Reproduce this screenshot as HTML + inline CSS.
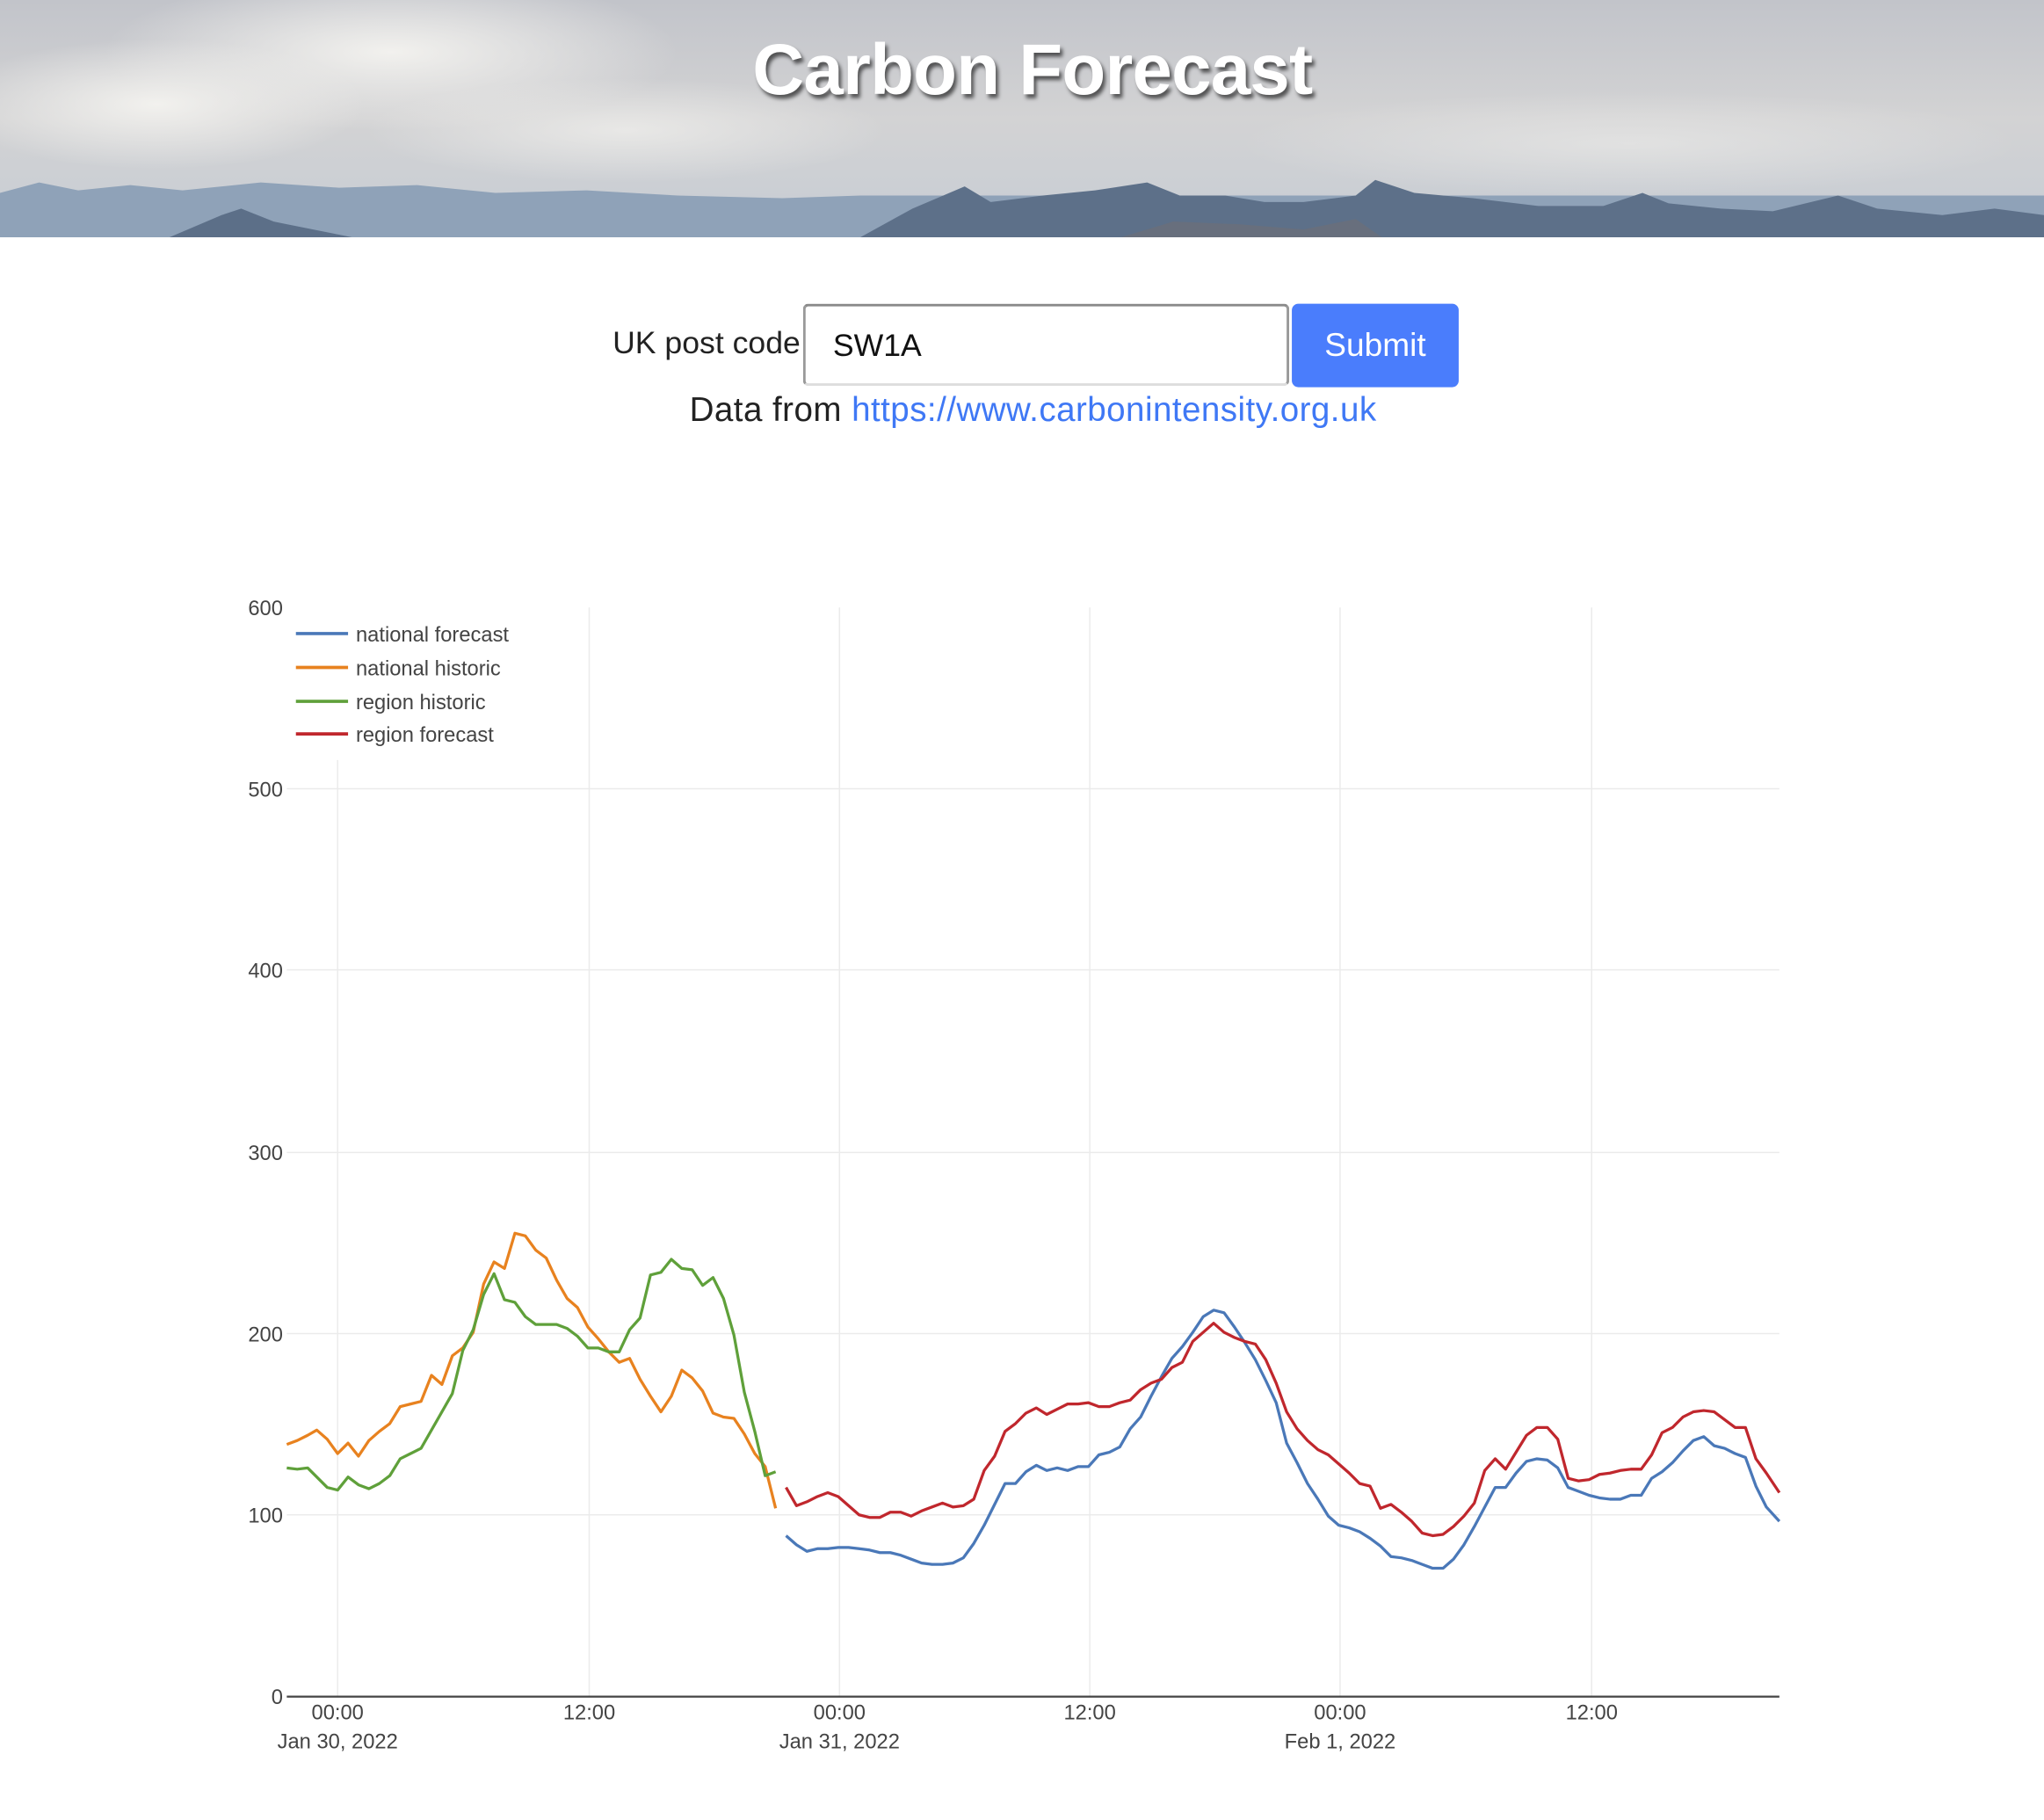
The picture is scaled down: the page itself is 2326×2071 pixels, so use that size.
<!DOCTYPE html>
<html><head><meta charset="utf-8"><style>
html,body{margin:0;padding:0;background:#fff;width:2326px;height:2070px;overflow:hidden}
#s{position:absolute;left:0;top:0;width:1568px;height:1396px;transform:scale(1.48342);transform-origin:0 0;font-family:"Liberation Sans",sans-serif}
.ban{position:absolute;left:0;top:0;width:1568px;height:182px;overflow:hidden}
h1{position:absolute;left:0;width:1584px;top:21px;margin:0;text-align:center;font-size:55px;font-weight:bold;color:#fff;text-shadow:2px 3px 3px rgba(0,0,0,.6);letter-spacing:-0.5px}
.lab{position:absolute;left:440px;width:174px;text-align:right;top:250px;font-size:24px;color:#222}
.inp{position:absolute;left:616px;top:233px;width:373px;height:63px;border:2px solid #999;border-top-color:#8a8a8a;border-bottom-color:#ddd;border-radius:4px;box-sizing:border-box}
.inp span{position:absolute;left:21px;top:17px;font-size:24px;color:#111}
.btn{position:absolute;left:991px;top:233px;width:128px;height:64px;background:#4a7dfc;border-radius:5px;color:#fff;font-size:25px;text-align:center;line-height:64px}
.data{position:absolute;left:0;width:1585px;text-align:center;top:299px;font-size:26px;color:#222;letter-spacing:0.3px}
.data a{color:#3f78f5;text-decoration:none}
</style></head><body><div id="s">
<div class="ban"><svg width="1568" height="182" viewBox="0 0 1568 182">
<defs><linearGradient id="sky" x1="0" y1="0" x2="0" y2="1"><stop offset="0" stop-color="#c2c4ca"/><stop offset=".5" stop-color="#d3d3d4"/><stop offset="1" stop-color="#c6ccd4"/></linearGradient>
<radialGradient id="cl" cx=".5" cy=".5" r=".5"><stop offset="0" stop-color="#f2f1ee"/><stop offset="1" stop-color="#f2f1ee" stop-opacity="0"/></radialGradient></defs>
<rect width="1568" height="182" fill="url(#sky)"/>
<ellipse cx="300" cy="40" rx="220" ry="60" fill="url(#cl)"/>
<ellipse cx="120" cy="80" rx="160" ry="50" fill="url(#cl)"/>
<ellipse cx="480" cy="100" rx="200" ry="40" fill="url(#cl)" opacity=".7"/>
<ellipse cx="1250" cy="110" rx="300" ry="40" fill="url(#cl)" opacity=".5"/>
<polygon points="0,182 0,148 30,140 60,146 100,142 140,146 200,140 260,144 320,142 380,148 450,146 520,150 600,152 660,150 700,150 1568,150 1568,182" fill="#8fa2b8"/>
<polygon points="130,182 170,165 185,160 210,170 260,180 270,182" fill="#5c6f88"/>
<polygon points="660,182 700,160 740,143 760,155 800,150 840,146 880,140 905,150 940,150 970,155 1000,155 1040,150 1055,138 1085,148 1130,152 1180,158 1230,158 1260,148 1280,156 1320,160 1360,162 1410,150 1440,160 1490,165 1530,160 1568,165 1568,182" fill="#5d7089"/>
<polygon points="860,182 900,170 950,172 1000,176 1040,168 1060,182" fill="#6e6f78" opacity=".7"/>
</svg></div>
<h1>Carbon Forecast</h1>
<div class="lab">UK post code</div>
<div class="inp"><span>SW1A</span></div>
<div class="btn">Submit</div>
<div class="data">Data from <a>https://www.carbonintensity.org.uk</a></div>
<svg style="position:absolute;left:0;top:0" width="1568" height="1396" viewBox="0 0 1568 1396" font-family="Liberation Sans, sans-serif">
<g stroke="#ebebeb" stroke-width="1">
<line x1="259" y1="583" x2="259" y2="1301"/><line x1="452" y1="466" x2="452" y2="1301"/><line x1="644" y1="466" x2="644" y2="1301"/><line x1="836" y1="466" x2="836" y2="1301"/><line x1="1028" y1="466" x2="1028" y2="1301"/><line x1="1221" y1="466" x2="1221" y2="1301"/>
<line x1="220" y1="605" x2="1365" y2="605"/><line x1="220" y1="744" x2="1365" y2="744"/><line x1="220" y1="884" x2="1365" y2="884"/><line x1="220" y1="1023" x2="1365" y2="1023"/><line x1="220" y1="1162" x2="1365" y2="1162"/>
</g>
<line x1="220" y1="1301.5" x2="1365" y2="1301.5" stroke="#444" stroke-width="1.5"/>
<g font-size="16" fill="#444" text-anchor="end">
<text x="217" y="472">600</text><text x="217" y="611">500</text><text x="217" y="750">400</text><text x="217" y="890">300</text><text x="217" y="1029">200</text><text x="217" y="1168">100</text><text x="217" y="1307">0</text>
</g>
<g font-size="16" fill="#444" text-anchor="middle">
<text x="259" y="1319">00:00</text><text x="452" y="1319">12:00</text><text x="644" y="1319">00:00</text><text x="836" y="1319">12:00</text><text x="1028" y="1319">00:00</text><text x="1221" y="1319">12:00</text>
<text x="259" y="1341">Jan 30, 2022</text><text x="644" y="1341">Jan 31, 2022</text><text x="1028" y="1341">Feb 1, 2022</text>
</g>
<g stroke-width="2.2" fill="none" stroke-linejoin="round">
<polyline stroke="#e8821f" points="220,1108 228,1105 236,1101 243,1097 251,1104 259,1115 267,1107 275,1117 283,1105 291,1098 299,1092 307,1079 315,1077 323,1075 331,1055 339,1062 347,1040 355,1034 363,1022 371,985 379,968 387,973 395,946 403,948 411,959 419,965 427,982 435,996 443,1003 451,1018 459,1027 467,1037 475,1045 483,1042 491,1058 499,1071 507,1083 515,1071 523,1051 531,1057 539,1067 547,1084 555,1087 563,1088 571,1100 579,1115 587,1125 595,1157"/>
<polyline stroke="#5fa03a" points="220,1126 228,1127 236,1126 243,1133 251,1141 259,1143 267,1133 275,1139 283,1142 291,1138 299,1132 307,1119 315,1115 323,1111 331,1097 339,1083 347,1069 355,1036 363,1020 371,993 379,977 387,997 395,999 403,1010 411,1016 419,1016 427,1016 435,1019 443,1025 451,1034 459,1034 467,1037 475,1037 483,1020 491,1011 499,978 507,976 515,966 523,973 531,974 539,986 547,980 555,996 563,1024 571,1068 579,1098 587,1132 595,1129"/>
<polyline stroke="#4a78b8" points="603,1178 611,1185 619,1190 627,1188 635,1188 643,1187 651,1187 659,1188 667,1189 675,1191 683,1191 691,1193 699,1196 707,1199 715,1200 723,1200 731,1199 739,1195 747,1184 755,1170 763,1154 771,1138 779,1138 787,1129 795,1124 803,1128 811,1126 819,1128 827,1125 835,1125 843,1116 851,1114 859,1110 867,1096 875,1087 883,1071 891,1056 899,1042 907,1033 915,1022 923,1010 931,1005 939,1007 947,1018 955,1030 963,1043 971,1059 979,1076 987,1107 995,1122 1003,1138 1011,1150 1019,1163 1027,1170 1035,1172 1043,1175 1051,1180 1059,1186 1067,1194 1075,1195 1083,1197 1091,1200 1099,1203 1107,1203 1115,1196 1123,1185 1131,1171 1139,1156 1147,1141 1155,1141 1163,1130 1171,1121 1179,1119 1187,1120 1195,1126 1203,1141 1211,1144 1219,1147 1227,1149 1235,1150 1243,1150 1251,1147 1259,1147 1267,1134 1275,1129 1283,1122 1291,1113 1299,1105 1307,1102 1315,1109 1323,1111 1331,1115 1339,1118 1347,1140 1355,1156 1365,1167"/>
<polyline stroke="#c0272d" points="603,1141 611,1155 619,1152 627,1148 635,1145 643,1148 651,1155 659,1162 667,1164 675,1164 683,1160 691,1160 699,1163 707,1159 715,1156 723,1153 731,1156 739,1155 747,1150 755,1128 763,1117 771,1098 779,1092 787,1084 795,1080 803,1085 811,1081 819,1077 827,1077 835,1076 843,1079 851,1079 859,1076 867,1074 875,1066 883,1061 891,1058 899,1049 907,1045 915,1029 923,1022 931,1015 939,1022 947,1026 955,1029 963,1031 971,1043 979,1061 987,1083 995,1096 1003,1105 1011,1112 1019,1116 1027,1123 1035,1130 1043,1138 1051,1140 1059,1157 1067,1154 1075,1160 1083,1167 1091,1176 1099,1178 1107,1177 1115,1171 1123,1163 1131,1153 1139,1128 1147,1119 1155,1127 1163,1114 1171,1101 1179,1095 1187,1095 1195,1104 1203,1134 1211,1136 1219,1135 1227,1131 1235,1130 1243,1128 1251,1127 1259,1127 1267,1116 1275,1099 1283,1095 1291,1087 1299,1083 1307,1082 1315,1083 1323,1089 1331,1095 1339,1095 1347,1119 1355,1130 1365,1145"/>
</g>
<g stroke-width="2.5">
<line x1="227" y1="486" x2="267" y2="486" stroke="#4a78b8"/><line x1="227" y1="512" x2="267" y2="512" stroke="#e8821f"/><line x1="227" y1="538" x2="267" y2="538" stroke="#5fa03a"/><line x1="227" y1="563" x2="267" y2="563" stroke="#c0272d"/>
</g>
<g font-size="16" fill="#444">
<text x="273" y="492">national forecast</text><text x="273" y="518">national historic</text><text x="273" y="544">region historic</text><text x="273" y="569">region forecast</text>
</g>
</svg>
</div></body></html>
